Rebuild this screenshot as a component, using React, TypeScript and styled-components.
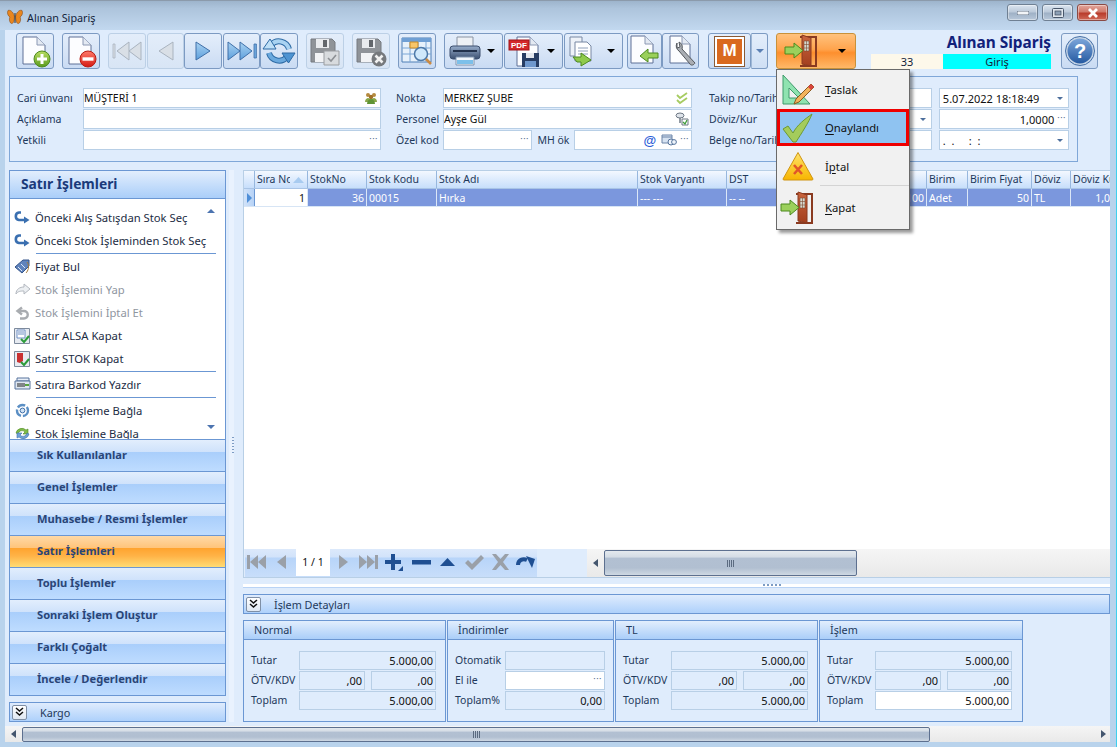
import React from "react";
import styled, { createGlobalStyle, css } from "styled-components";

const Global = createGlobalStyle`
  html, body { margin: 0; padding: 0; width: 1117px; height: 747px; overflow: hidden; }
  body { font-family: "Noto Sans", "DejaVu Sans", sans-serif; font-size: 11px; color: #1e395b; }
  * { box-sizing: border-box; }
`;

const FONT_NAVY = "#1e395b";

const Root = styled.div`
  width: 1117px; height: 747px; background: #b9d3ec; display: flex; flex-direction: column;
  border-right: 1px solid #3fd0ee;
`;
const TitleBar = styled.div`
  height: 30px; flex: none; display: flex; align-items: center; padding: 3px 8px 0 7px;
  background: linear-gradient(#9db4cc 0, #adc4dc 25%, #c2d8ef 100%);
  border-top: 1px solid #8b9aab;
`;
const TitleText = styled.span`
  margin-left: 4px; font-size: 10.8px; color: #14233a; flex: 1;
`;
const WinBtn = styled.div<{ $close?: boolean }>`
  width: 31px; height: 17px; margin-left: 4px; border: 1px solid ${p => (p.$close ? "#8a4a44" : "#6f8093")};
  border-radius: 3px; display: flex; align-items: center; justify-content: center; margin-top: -9px;
  background: ${p => p.$close
    ? "linear-gradient(#e3a79c 0, #d0796b 45%, #b93c2c 55%, #cf6a58 100%)"
    : "linear-gradient(#dbe5f0 0, #bccada 45%, #9fb1c6 55%, #b8c8da 100%)"};
  box-shadow: inset 0 0 0 1px rgba(255,255,255,.4);
`;
const WinBody = styled.div`
  flex: 1; min-height: 0; margin: 0 6px 5px 5px; background: #dfecfc; display: flex; flex-direction: column;
`;
const Toolbar = styled.div`
  height: 43px; flex: none; display: flex; padding: 3px 0 0 11px; align-items: flex-start;
`;
const Tool = styled.div<{ $w?: number; $gap?: number; $off?: boolean; $split?: boolean }>`
  width: ${p => p.$w ?? 38}px; height: 36px; margin-left: ${p => p.$gap ?? 0}px; flex: none;
  border: 1px solid ${p => (p.$off ? "#bcd0e6" : "#7c9ac2")}; border-radius: 3px;
  display: flex; align-items: center; justify-content: ${p => (p.$split ? "flex-start" : "center")};
  background: ${p => p.$off ? "linear-gradient(#e3edfa,#d8e5f5)" : "linear-gradient(#e4eefb 0,#d5e3f6 60%,#c9dbf3 100%)"};
  padding-left: ${p => (p.$split ? 3 : 0)}px;
`;
const Caret = styled.span<{ $color?: string }>`
  width: 0; height: 0; margin-left: auto; margin-right: 7px;
  border-left: 4px solid transparent; border-right: 4px solid transparent;
  border-top: 4px solid ${p => p.$color ?? "#000"};
`;
const MBox = styled.div`
  width: 29px; height: 29px; margin-left: 3px; background: #d9691f; border: 2px solid #fff; outline: 1px solid #8a5a35;
  color: #fff; font: bold 17px "Liberation Sans", sans-serif; display: flex; align-items: center; justify-content: center;
`;
const SplitEnd = styled.div`
  width: 17px; height: 36px; flex: none; border: 1px solid #7c9ac2; border-left: 1px solid #9fb8d6; border-radius: 0 3px 3px 0;
  background: linear-gradient(#e4eefb,#cfdff4); display: flex; align-items: center; justify-content: center;
  ${Caret} { margin: 0; }
`;
const ExitWrap = styled.div`
  position: relative; margin-left: 8px; flex: none;
`;
const ExitBtn = styled.div`
  width: 80px; height: 36px; border: 1px solid #c8913a; border-radius: 3px; display: flex; align-items: center; padding-left: 7px;
  background: linear-gradient(#ffc27e 0,#ffa44d 45%,#fd8f2e 55%,#ffb868 100%);
  ${Caret} { margin-right: 9px; }
`;
const Menu = styled.div`
  position: absolute; left: 0; top: 36px; width: 134px; height: 161px; z-index: 5;
  border: 1px solid #6a6a6a; background: #f1f1f1; box-shadow: 3px 3px 3px rgba(0,0,0,.4);
  display: flex; flex-direction: column;
`;
const MenuItem = styled.div<{ $h: number; $on?: boolean; $sep?: boolean }>`
  height: ${p => p.$h}px; flex: none; display: flex; align-items: center; position: relative; color: #111;
  font-size: 11.3px;
  ${p => p.$on && css`background: #8fc3f1; outline: 3px solid #ee0000; outline-offset: -3px;`}
  ${p => p.$sep && css`&::after { content: ""; position: absolute; left: 43px; right: 0; bottom: 0; height: 1px; background: #d4d4d4; }`}
`;
const MenuIconCell = styled.span`
  width: 42px; flex: none; height: 100%; display: flex; align-items: center; justify-content: center;
`;
const MenuLabel = styled.span`
  margin-left: 6px;
  u { text-underline-offset: 2px; }
`;
const Brand = styled.div`
  width: 180px; margin-left: 15px; flex: none; display: flex; flex-direction: column;
`;
const BrandTitle = styled.div`
  height: 21px; text-align: right; font: bold 15.4px/19px "Noto Sans", sans-serif; color: #11217a;
`;
const BrandRow = styled.div`
  display: flex; height: 15px; margin-top: 0; font-size: 11px; line-height: 15px; text-align: center; color: #14233a;
`;
const BrandNum = styled.span`width: 72px; background: #fdf8ea;`;
const BrandMode = styled.span`flex: 1; background: #00ffff;`;

const HeadPanel = styled.div`
  flex: none; height: 86px; margin: 3px 0 0 4px; width: 1069px; border: 1px solid #7fa7d8;
  display: flex; padding: 11px 0 0 7px; align-items: flex-start;
`;
const FormCol = styled.div<{ $w: number; $gap?: number }>`
  width: ${p => p.$w}px; margin-left: ${p => p.$gap ?? 0}px; flex: none; display: flex; flex-direction: column; gap: 1px;
`;
const FormRow = styled.div`display: flex; height: 20px; align-items: stretch;`;
const Label = styled.label<{ $w: number }>`
  width: ${p => p.$w}px; flex: none; line-height: 20px; font-size: 10.5px; color: ${FONT_NAVY}; white-space: nowrap;
`;
const Input = styled.div<{ $w?: number; $ro?: boolean; $right?: boolean; $gap?: number; $wide?: boolean }>`
  ${p => (p.$w ? `width:${p.$w}px;flex:none;` : "flex:1;min-width:0;")}
  margin-left: ${p => p.$gap ?? 0}px;
  background: ${p => (p.$ro ? "#dfecfc" : "#fff")}; border: 1px solid #b8cfe6; display: flex; align-items: center;
  padding: 0 2px 0 0; font-size: ${p => (p.$wide ? 11 : 10.5)}px; color: #111; white-space: nowrap; overflow: hidden; gap: 3px;
  justify-content: ${p => (p.$right ? "flex-end" : "flex-start")};
`;
const Grow = styled.span`flex: 1; min-width: 0;`;
const Dots = styled.span`color: #54708f; font-size: 9px; letter-spacing: .5px; line-height: 10px; margin-top: -3px;`;
const DownTick = styled.span`
  width: 0; height: 0; border-left: 3px solid transparent; border-right: 3px solid transparent; border-top: 3px solid #4c6e9c; margin: 0 3px;
`;

const Main = styled.div`flex: 1; min-height: 0; display: flex; margin-top: 8px;`;
const LeftCol = styled.div`width: 217px; margin-left: 4px; flex: none; display: flex; flex-direction: column;`;
const SideBox = styled.div`
  height: 526px; border: 1px solid #6b97d3; display: flex; flex-direction: column; background: #fff;
`;
const SideHead = styled.div`
  height: 28px; flex: none; font: bold 13.8px/26px "Noto Sans", sans-serif; color: #1a3a7a; padding-left: 11px;
  background: linear-gradient(#e2eefd,#aacef9); border-bottom: 1px solid #6b97d3;
`;
const SideList = styled.div`
  flex: 1; min-height: 0; overflow: hidden; position: relative; padding-top: 7px;
`;
const SideItem = styled.div<{ $off?: boolean }>`
  height: 23px; flex: none; display: flex; align-items: center; padding-left: 4px; gap: 4px; font-size: 11.25px; white-space: nowrap;
  color: ${p => (p.$off ? "#8f969f" : "#1c2c44")};
`;
const SideSep = styled.div<{ $h?: number }>`
  height: 1px; background: #6b97d3; margin: ${p => p.$h ?? 1}px 9px ${p => p.$h ?? 1}px 26px;
`;
const ScrollTick = styled.span<{ $up?: boolean }>`
  position: absolute; right: 10px; ${p => (p.$up ? "top: 10px;" : "bottom: 10px;")}
  width: 0; height: 0; border-left: 4px solid transparent; border-right: 4px solid transparent;
  ${p => (p.$up ? "border-bottom" : "border-top")}: 4px solid #4c74b0;
`;
const Acc = styled.div<{ $on?: boolean }>`
  height: 32px; flex: none; border-top: 1px solid #6b97d3; padding-left: 27px; font: bold 11.15px/29px "Noto Sans", sans-serif; color: #2a4577;
  background: ${p => p.$on
    ? "linear-gradient(#ffd9a6 0,#ffc47a 12px,#ffa32e 12px,#ffb347 20px,#ffdc75 31px)"
    : "linear-gradient(#e2eefd 0,#cfe2fb 12px,#a9cefb 12px,#bedcff 31px)"};
`;
const FoldBar = styled.div<{ $mt: number }>`
  height: 20px; flex: none; margin-top: ${p => p.$mt}px; display: flex; align-items: center; padding-left: 2px;
  border: 1px solid #6b97d3; background: linear-gradient(#dfecfd,#aed1fb); font-size: 10.8px; color: ${FONT_NAVY};
`;
const FoldBtn = styled.span`
  width: 15px; height: 15px; flex: none; border: 1px solid #7f8fa5; border-radius: 2px; background: linear-gradient(#fff,#dfe8f3);
  display: flex; align-items: center; justify-content: center; margin-right: 13px;
`;

const VGrip = styled.div`
  width: 17px; flex: none; position: relative;
  &::after { content: ""; position: absolute; left: 6px; top: 267px; width: 2px; height: 16px;
    background: repeating-linear-gradient(#7d9cc4 0 1px, transparent 1px 3px); }
  &::before { content: ""; position: absolute; left: 3px; top: 0; bottom: 4px; width: 5px; background: #e9f2fe; }
`;
const RightCol = styled.div`flex: 1; min-width: 0; display: flex; flex-direction: column;`;
const GridBox = styled.div`
  height: 408px; flex: none; background: #fff; border: 1px solid #b8cfe6; border-right: none; display: flex; flex-direction: column; position: relative; overflow: hidden;
`;
const COLS = "11px 53px 59px 70px 201px 89px 67px 67px 66px 41px 64px 39px 60px";
const GridHead = styled.div`
  display: grid; grid-template-columns: ${COLS}; height: 18px; flex: none;
  background: linear-gradient(#f3f8ff,#c7defb); border-bottom: 1px solid #a9c4e6;
`;
const HeadCell = styled.div`
  border-right: 1px solid #97b7de; padding: 0 2px; font-size: 10.5px; line-height: 17px; color: ${FONT_NAVY}; white-space: nowrap; overflow: hidden;
  display: flex; align-items: center;
`;
const HeadClip = styled.span`width: 33px; flex: none; overflow: hidden; margin-right: 3px;`;
const GridRow = styled.div`
  display: grid; grid-template-columns: ${COLS}; height: 18px; flex: none; border-bottom: 1px solid #d7e5f5;
`;
const RowCell = styled.div<{ $right?: boolean; $plain?: boolean }>`
  background: ${p => (p.$plain ? "#fff" : "#7b97dd")}; color: ${p => (p.$plain ? "#111" : "#fff")};
  border-right: 1px solid #dbe7f7; padding: 0 2px; font-size: 10.5px; line-height: 18px; white-space: nowrap; overflow: hidden;
  text-align: ${p => (p.$right ? "right" : "left")};
`;
const RowMark = styled.div`
  background: linear-gradient(90deg,#d2e3f9,#b6d2f6); border-right: 1px solid #6b97d3; display: flex; align-items: center; justify-content: center;
`;
const Filler = styled.div`flex: 1;`;
const GridFoot = styled.div`height: 28px; flex: none; display: flex; align-items: stretch; padding-left: 1px; background: #dfecfc;`;
const Navigator = styled.div`
  width: 292px; flex: none; display: flex; align-items: center; height: 28px; padding-bottom: 2px;
  background: linear-gradient(#dce9fb 0,#d2e3fa 8px,#b7d4f9 9px,#c8defa 28px);
`;
const Pager = styled.span`
  width: 34px; height: 28px; background: #fff; text-align: center; line-height: 26px; font-size: 10.5px; color: #111; margin: -2px 0 -2px 10px; padding-top: 1px;
`;
const NavGap = styled.span<{ $ml: number }>`margin-left: ${p => p.$ml}px; flex: none; display: flex; align-items: center; justify-content: center;`;
const HScroll = styled.div<{ $ml?: number }>`
  flex: 1; min-width: 0; margin-left: ${p => p.$ml ?? 0}px; background: linear-gradient(#f5f5f5,#e9e9e9); display: flex; align-items: center;
`;
const BottomScroll = styled(HScroll)`flex: none; height: 16px;`;
const ArrowL = styled.span`
  width: 0; height: 0; margin: 0 6px 0 6px; border-top: 4px solid transparent; border-bottom: 4px solid transparent; border-right: 5px solid #44566e; flex: none;
`;
const ArrowR = styled.span`
  width: 0; height: 0; margin: 0 4px 0 auto; border-top: 4px solid transparent; border-bottom: 4px solid transparent; border-left: 5px solid #44566e; flex: none;
`;
const Thumb = styled.div<{ $w: number; $h: number }>`
  width: ${p => p.$w}px; height: ${p => p.$h}px; flex: none; border: 1px solid #5d708f; border-radius: 2px;
  background: linear-gradient(#e4e9ee 0,#d4dce5 25%,#b2c0d2 30%,#b1bfd1 70%,#ced8e3 100%);
  display: flex; align-items: center; justify-content: center;
`;
const Grip = styled.span`
  width: 7px; height: 7px; background: repeating-linear-gradient(90deg,#5b6b80 0 1px,transparent 1px 2px);
`;
const HGrip = styled.div`
  height: 16px; flex: none; position: relative;
  &::before { content: ""; position: absolute; left: 0; right: 0; top: 6px; height: 3px; background: #fff; border-bottom: 1px solid #b9d3f5; }
  &::after { content: ""; position: absolute; left: 520px; top: 6px; width: 19px; height: 2px;
    background: repeating-linear-gradient(90deg,#7d9cc4 0 2px,transparent 2px 4px); }
`;
const Groups = styled.div`display: flex; margin-top: 6px; align-items: flex-start;`;
const Group = styled.div<{ $w: number }>`
  width: ${p => p.$w}px; height: 102px; flex: none; border: 1px solid #6b97d3; margin-right: 1px; display: flex; flex-direction: column;
`;
const GroupHead = styled.div`
  height: 19px; flex: none; font-size: 10.8px; line-height: 18px; padding-left: 10px; color: ${FONT_NAVY};
  background: linear-gradient(#e2eefd,#aacef9); border-bottom: 1px solid #6b97d3;
`;
const GroupBody = styled.div`
  padding: 11px 0 0 7px; display: flex; flex-direction: column; gap: 1px;
`;
const GRow = styled.div`display: flex; height: 19px;`;
const GLabel = styled.span<{ $w: number }>`
  width: ${p => p.$w}px; flex: none; font-size: 10.5px; line-height: 18px; color: ${FONT_NAVY}; white-space: nowrap;
`;

/* ---------- drawings ---------- */
const lg = (id: string, a: string, b: string) => (
  <linearGradient id={id} x1="0" y1="0" x2="0" y2="1"><stop offset="0" stopColor={a} /><stop offset="1" stopColor={b} /></linearGradient>
);
const Page = ({ x = 5, y = 3, w = 22, h = 27 }: { x?: number; y?: number; w?: number; h?: number }) => (
  <g>
    <path d={`M${x} ${y}h${w - 8}l8 8v${h - 8}h-${w}z`} fill="#fcfdff" stroke="#5f7197" strokeWidth="1" />
    <path d={`M${x + w - 8} ${y}v8h8`} fill="#e3e9f2" stroke="#8b98b3" strokeWidth="1" />
  </g>
);
const NewIcon = () => (
  <svg width="34" height="34" viewBox="0 0 34 34">
    <defs>{lg("gn", "#b9dd63", "#5a9a1c")}</defs>
    <Page />
    <circle cx="24" cy="25" r="8" fill="url(#gn)" stroke="#4d8a1f" />
    <path d="M24 20v10M19 25h10" stroke="#fff" strokeWidth="3" />
  </svg>
);
const DelIcon = () => (
  <svg width="34" height="34" viewBox="0 0 34 34">
    <defs>{lg("rd", "#ff7a6a", "#d51a14")}</defs>
    <Page />
    <circle cx="24" cy="25" r="8" fill="url(#rd)" stroke="#b71c14" />
    <path d="M18.5 25h11" stroke="#fff" strokeWidth="3.4" />
  </svg>
);
const First = ({ off }: { off?: boolean }) => {
  const f = off ? "#d9dfe6" : "#8cc0ea", s = off ? "#a9b3bf" : "#4b78ae";
  return (
    <svg width="32" height="24" viewBox="0 0 32 24">
      <path d="M2 5h2v14h-2z" fill={f} stroke={s} strokeWidth=".8" />
      <path d="M18 3v18L6 12zM30 3v18L18 12z" fill={f} stroke={s} />
    </svg>
  );
};
const Prev = () => (
  <svg width="20" height="24" viewBox="0 0 20 24"><path d="M17 3v18L3 12z" fill="#d9dfe6" stroke="#a9b3bf" /></svg>
);
const Next = () => (
  <svg width="20" height="24" viewBox="0 0 20 24">
    <defs>{lg("bl", "#a9d2f2", "#5d9fdc")}</defs>
    <path d="M3 3v18l14-9z" fill="url(#bl)" stroke="#3f6fa8" />
  </svg>
);
const Last = () => (
  <svg width="32" height="24" viewBox="0 0 32 24">
    <defs>{lg("bl2", "#a9d2f2", "#5d9fdc")}</defs>
    <path d="M2 3v18l12-9zM14 3v18l12-9z" fill="url(#bl2)" stroke="#3f6fa8" />
    <path d="M28 5h2.4v14H28z" fill="#6ea9e0" stroke="#3f6fa8" strokeWidth=".8" />
  </svg>
);
const Refresh = () => (
  <svg width="34" height="32" viewBox="0 0 34 32">
    <g fill="none" strokeLinecap="butt">
      <path d="M9 10A10.500 10.500 0 0 1 27 14" stroke="#2e6ba5" strokeWidth="6" />
      <path d="M9 10A10.500 10.500 0 0 1 27 14" stroke="#a9d3f2" strokeWidth="4" />
      <path d="M25 22A10.500 10.500 0 0 1 7 18" stroke="#2e6ba5" strokeWidth="6" />
      <path d="M25 22A10.500 10.500 0 0 1 7 18" stroke="#6aa9de" strokeWidth="4" />
    </g>
    <path d="M1 14l7-10 6 10z" fill="#bfe0f7" stroke="#2e6ba5" />
    <path d="M20 18h13l-6.500 10z" fill="#4e94d2" stroke="#2e6ba5" />
  </svg>
);
const Floppy = ({ x }: { x?: boolean }) => (
  <svg width="34" height="32" viewBox="0 0 34 32">
    <path d="M3 4h21l3 3v20H3z" fill="#8f9398" stroke="#777b80" />
    <path d="M8 4h13v9H8z" fill="#e9ebee" />
    <path d="M15 5h4v7h-4z" fill="#62666b" />
    <path d="M7 18h16v9H7z" fill="#f2f3f5" />
    {x ? (
      <g>
        <circle cx="25" cy="24" r="7.5" fill="#76797d" />
        <path d="M21.5 20.5l7 7M28.5 20.5l-7 7" stroke="#f1f1f1" strokeWidth="2.6" />
      </g>
    ) : (
      <g>
        <path d="M16 16h15v14H16z" fill="#d8dbde" stroke="#9a9da1" />
        <path d="M20 23l3 3 5-6" fill="none" stroke="#8d9095" strokeWidth="1.6" />
      </g>
    )}
  </svg>
);
const TableSearch = () => (
  <svg width="34" height="32" viewBox="0 0 34 32">
    <path d="M2 3h29v24H2z" fill="#e7f1fb" stroke="#4f7fb5" />
    <path d="M2 3h29v4H2z" fill="#6f9fd4" />
    <path d="M2 13h29M2 19h29M10 7v20M18 7v20M26 7v20" stroke="#7ba6d6" fill="none" />
    <path d="M10 7h8v6h-8z" fill="#f8c66a" stroke="#c98a24" />
    <circle cx="21" cy="19" r="6.5" fill="#cfe8fb" stroke="#4d79a8" strokeWidth="1.5" />
    <path d="M26 24l5 5" stroke="#c98a44" strokeWidth="2.6" />
  </svg>
);
const Printer = () => (
  <svg width="34" height="32" viewBox="0 0 34 32">
    <defs>{lg("pr", "#98aecb", "#3b4f70")}</defs>
    <path d="M9 2h16v11H9z" fill="#eef1f5" stroke="#8a94a3" />
    <rect x="2" y="11" width="30" height="13" rx="3" fill="url(#pr)" stroke="#3c4f6e" />
    <path d="M5 16h24" stroke="#23324c" strokeWidth="2" />
    <path d="M8 22h18v8H8z" fill="#f2f7fc" stroke="#7f93ad" />
    <path d="M9 25h16v4H9z" fill="#7cc0ea" />
  </svg>
);
const PdfIcon = () => (
  <svg width="34" height="33" viewBox="0 0 34 33">
    <Page x={9} y={2} w={21} h={29} />
    <rect x="1" y="5" width="20" height="10" fill="#d3272a" stroke="#a01518" />
    <text x="3" y="13" fontFamily="Liberation Sans" fontWeight="bold" fontSize="8" fill="#fff">PDF</text>
    <path d="M14 18h17v14H14z" fill="#273d63" />
    <path d="M18 18h8v5h-8z" fill="#e3e7ee" />
    <path d="M17 26h11v6H17z" fill="#6f98cd" />
  </svg>
);
const CopyIcon = () => (
  <svg width="30" height="32" viewBox="0 0 30 32">
    <path d="M2 2h12v19H2z" fill="#eef2f8" stroke="#7888a3" />
    <path d="M7 7h12l4 4v15H7z" fill="#fff" stroke="#7888a3" />
    <path d="M10 13h10M10 16h10M10 19h10" stroke="#8fa0bb" />
    <path d="M5 22h8v-4l10 7-10 6v-4H9z" fill="#8fca4c" stroke="#4d8a1f" />
  </svg>
);
const BackDoc = () => (
  <svg width="30" height="32" viewBox="0 0 30 32">
    <Page x={1} y={1} w={22} h={27} />
    <path d="M28 18v5H18v4L10 21l8-7v4z" fill="#9ad05a" stroke="#4d8a1f" />
  </svg>
);
const WrenchDoc = () => (
  <svg width="32" height="33" viewBox="0 0 32 33">
    <Page x={5} y={1} w={20} h={27} />
    <path d="M12 8a6 6 0 0 0 2 8l11 13c1 2 4 1 5-1L17 14a6 6 0 0 0-3-7l1 5-3 1z" fill="#a9adb3" stroke="#55595e" />
  </svg>
);
const Door = ({ s = 1 }: { s?: number }) => (
  <svg width={36 * s} height={34 * s} viewBox="0 0 36 34">
    <defs>{lg("dr", "#c9653f", "#a33f1e")}</defs>
    <path d="M16 3h16v29H16" fill="none" stroke="#8a3a20" strokeWidth="2" />
    <path d="M18 1l9 3v28l-9-2z" fill="url(#dr)" stroke="#8a3a20" />
    <path d="M20 7h5v10h-5z" fill="#d6d8cf" stroke="#7c4a30" strokeWidth=".6" />
    <path d="M20 10.5h5M20 14h5M22.5 7v10" stroke="#7c4a30" strokeWidth=".6" />
    <path d="M1 13h9V9l9 7.5-9 7.5v-4H1z" fill="#9bd05c" stroke="#4d8a1f" />
  </svg>
);
const HelpIcon = () => (
  <svg width="30" height="30" viewBox="0 0 30 30">
    <defs>{lg("hp", "#7fa8dc", "#22579f")}</defs>
    <circle cx="15" cy="15" r="13.5" fill="url(#hp)" stroke="#c5d4e6" strokeWidth="2" />
    <circle cx="15" cy="15" r="14.5" fill="none" stroke="#456fa6" />
    <text x="15" y="22" textAnchor="middle" fontFamily="Liberation Sans" fontWeight="bold" fontSize="20" fill="#fff">?</text>
  </svg>
);
const Butterfly = () => (
  <svg width="16" height="16" viewBox="0 0 16 16">
    <path d="M7.4 7C6 2.5 3 .5 1 1.5-.3 4 1 7 3 8 1.5 10 3 15 5 14.5c2-.5 2.4-4 2.4-7.5z" fill="#e8861f" stroke="#7a3f10" strokeWidth=".5" />
    <path d="M8.6 7C10 2.5 13 .5 15 1.5c1.3 2.5 0 5.5-2 6.5 1.5 2 0 7-2 6.5-2-.5-2.4-4-2.4-7.5z" fill="#e8861f" stroke="#7a3f10" strokeWidth=".5" />
    <path d="M8 4v10" stroke="#333" strokeWidth="1" />
  </svg>
);
const GroupUsers = () => (
  <svg width="14" height="13" viewBox="0 0 14 13">
    <circle cx="4" cy="3" r="2" fill="#b58a3e" /><circle cx="10" cy="3" r="2" fill="#b58a3e" />
    <circle cx="7" cy="5" r="2.2" fill="#a07028" />
    <path d="M1 10c0-3 2-4 3-4s3 1 3 4zM7 10c0-3 2-4 3-4s3 1 3 4z" fill="#8aa84a" />
    <path d="M3 12c0-3 2-5 4-5s4 2 4 5z" fill="#5f9436" />
  </svg>
);
const DoubleCheck = () => (
  <svg width="14" height="13" viewBox="0 0 14 13">
    <path d="M2 3l3 3 7-5M2 8l3 3 7-5" fill="none" stroke="#a7cc62" strokeWidth="1.8" />
  </svg>
);
const PersonCheck = () => (
  <svg width="14" height="14" viewBox="0 0 14 14">
    <ellipse cx="5" cy="3.5" rx="4" ry="2.5" fill="#dfe4ea" stroke="#6e7884" />
    <path d="M5 6v5" stroke="#6e7884" strokeWidth="1.5" />
    <path d="M7 7h6v6H7z" fill="#fff" stroke="#6e7884" />
    <path d="M8 10l2 2 2-4" fill="none" stroke="#3f9d3a" strokeWidth="1.3" />
  </svg>
);
const MailCard = () => (
  <svg width="16" height="12" viewBox="0 0 16 12">
    <path d="M1 1h10v8H1z" fill="#d7e3f2" stroke="#6d85a8" />
    <path d="M1 3h10" stroke="#6d85a8" />
    <circle cx="10" cy="8" r="3" fill="#eef4fb" stroke="#56749c" />
    <circle cx="13" cy="8" r="2.4" fill="#eef4fb" stroke="#56749c" />
  </svg>
);
const At = styled.span`color: #2a5ed8; font: bold 13px "Liberation Sans", sans-serif; margin-right: 2px;`;
const Chevrons = () => (
  <svg width="9" height="10" viewBox="0 0 9 10">
    <path d="M1 1l3.5 3L8 1M1 5l3.5 3L8 5" fill="none" stroke="#111" strokeWidth="1.5" />
  </svg>
);
const MinI = () => <svg width="12" height="4" viewBox="0 0 12 4"><rect width="12" height="4" rx="1" fill="#f2f5f8" stroke="#48566a" strokeWidth=".8" /></svg>;
const MaxI = () => <svg width="12" height="10" viewBox="0 0 12 10"><rect x=".5" y=".5" width="11" height="9" rx="1" fill="#dfe6ee" stroke="#48566a" /><rect x="3" y="3" width="6" height="4" fill="#8da0b6" stroke="#39465a" strokeWidth=".7" /></svg>;
const CloseI = () => <svg width="12" height="10" viewBox="0 0 12 10"><path d="M2 1l8 8M10 1l-8 8" stroke="#fff" strokeWidth="2.8" /></svg>;

/* sidebar icons */
const CurveBlue = () => (
  <svg width="17" height="15" viewBox="0 0 17 15"><path d="M7 2.5H5a3.8 3.8 0 0 0 0 7.5h6" fill="none" stroke="#3a6fb0" strokeWidth="2.6" /><path d="M10 6.5l5.5 3.5-5.5 3.5z" fill="#3a6fb0" /></svg>
);
const Tag = () => (
  <svg width="17" height="15" viewBox="0 0 17 15"><path d="M1 8l8-7h6v6l-7 7z" fill="#5f83bd" stroke="#35558a" /><path d="M4 8l4 4M7 5l4 4" stroke="#dbe6f5" /><path d="M13 3c3 4 1 9-1 11" fill="none" stroke="#a67b3a" /></svg>
);
const GrayFwd = () => (
  <svg width="17" height="15" viewBox="0 0 17 15"><path d="M2 12c0-5 4-7 8-7V2l6 5-6 5V9c-3 0-6 0-8 3z" fill="#eceff2" stroke="#b3b8bf" /></svg>
);
const GrayBack = () => (
  <svg width="17" height="15" viewBox="0 0 17 15"><path d="M8 2.5L3.5 6 8 9.5" fill="none" stroke="#a9acb0" strokeWidth="2.4" /><path d="M4 6h6a3.6 3.6 0 0 1 0 7.5H6" fill="none" stroke="#a9acb0" strokeWidth="2.4" /></svg>
);
const DocCheck = ({ red }: { red?: boolean }) => (
  <svg width="17" height="16" viewBox="0 0 17 16">
    <path d="M.5.5h15v15H.5z" fill="#e7ebf1" stroke="#7d8a9c" />
    {red ? <path d="M3 2h6v8l-3 2-3-1z" fill="#c93131" /> : <path d="M3 2h8v8H3z" fill="#fff" stroke="#6f8fc4" />}
    {!red && <path d="M4 4h6M4 6h6" stroke="#6f8fc4" />}
    <path d="M7 11l3 3 5-6" fill="none" stroke="#2d9c3a" strokeWidth="2" />
  </svg>
);
const Barcode = () => (
  <svg width="17" height="15" viewBox="0 0 17 15">
    <path d="M3 1h12v3H3z" fill="#eaf0f8" stroke="#57739c" />
    <path d="M1 4h15v8H1z" fill="#dfe7f1" stroke="#57739c" />
    <path d="M4 6v4M6 6v4M8 6v4M10 6v4" stroke="#222" />
    <path d="M11 8h4" stroke="#59a53e" strokeWidth="2" />
  </svg>
);
const Circles = () => (
  <svg width="17" height="15" viewBox="0 0 17 15">
    <circle cx="8.5" cy="7.5" r="5.5" fill="none" stroke="#5b8fc4" strokeWidth="2.4" strokeDasharray="8 2" />
    <circle cx="8.5" cy="7.5" r="2.4" fill="#cfe2f5" stroke="#3f6fa8" />
  </svg>
);
const GreenSync = () => (
  <svg width="17" height="15" viewBox="0 0 17 15">
    <path d="M2 7a6 6 0 0 1 10-3l2-1v5H9l2-2a4 4 0 0 0-7 2z" fill="#7fbb4a" stroke="#4d8a1f" strokeWidth=".6" />
    <path d="M15 8a6 6 0 0 1-10 3l-2 1V7h5L6 9a4 4 0 0 0 7-2z" fill="#6fa2d6" stroke="#3f6fa8" strokeWidth=".6" />
  </svg>
);
/* navigator */
const NavFirst = ({ c = "#9aa0a8" }: { c?: string }) => (
  <svg width="20" height="16" viewBox="0 0 20 16"><path d="M1 1h3v14H1zM12 1v14L4 8zM20 1v14l-8-7z" fill={c} /></svg>
);
const NavPrev = ({ c = "#9aa0a8" }: { c?: string }) => (
  <svg width="10" height="16" viewBox="0 0 10 16"><path d="M10 1v14L1 8z" fill={c} /></svg>
);
const NavNext = ({ c = "#9aa0a8" }: { c?: string }) => (
  <svg width="10" height="16" viewBox="0 0 10 16"><path d="M0 1v14l9-7z" fill={c} /></svg>
);
const NavLast = ({ c = "#9aa0a8" }: { c?: string }) => (
  <svg width="20" height="16" viewBox="0 0 20 16"><path d="M0 1v14l8-7zM8 1v14l8-7zM16 1h3v14h-3z" fill={c} /></svg>
);
const NavPlus = () => (
  <svg width="19" height="19" viewBox="0 0 19 19"><path d="M6 1h4v6h6v4h-6v6H6v-6H0V7h6z" fill="#1f4f92" /><path d="M18 13v5h-5z" fill="#1f4f92" /></svg>
);
const NavMinus = () => <svg width="19" height="5" viewBox="0 0 19 5"><rect width="19" height="4.5" fill="#1f4f92" /></svg>;
const NavUp = () => <svg width="15" height="9" viewBox="0 0 15 9"><path d="M7.5 0L15 8H0z" fill="#1f4f92" /></svg>;
const NavCheck = () => <svg width="19" height="15" viewBox="0 0 19 15"><path d="M0 8l3-3 4 4 9-9 3 3L7 15z" fill="#9aa0a8" /></svg>;
const NavX = () => <svg width="19" height="16" viewBox="0 0 19 16"><path d="M1 0h4l4.500 5L14 0h4l-6 8 6 8h-4l-4.500-5L5 16H1l6-8z" fill="#9aa0a8" /></svg>;
const NavRedo = () => (
  <svg width="19" height="14" viewBox="0 0 19 14"><path d="M2 10c0-5 5-7 9-5" fill="none" stroke="#1f4f92" strokeWidth="4" /><path d="M10 1l9 3-3 9z" fill="#1f4f92" /></svg>
);
/* menu */
const SquarePencil = () => (
  <svg width="34" height="34" viewBox="0 0 34 34">
    <path d="M2 2v29h27z" fill="#8fe3b0" stroke="#3e9a6a" />
    <path d="M8 15v10h10z" fill="#f1f1f1" stroke="#3e9a6a" />
    <path d="M15 26l-2 5 5-2 15-15-3-3z" fill="#f3b35b" stroke="#8a5a20" />
    <path d="M27 14l3 3 3-3-3-3z" fill="#d9443e" />
  </svg>
);
const BigCheck = () => (
  <svg width="32" height="30" viewBox="0 0 32 30">
    <path d="M1 16l5-3 5 7C15 12 23 6 30 1c-3 8-11 20-16 28h-3z" fill="#a4cc5c" stroke="#6c9a33" />
  </svg>
);
const Warn = () => (
  <svg width="32" height="30" viewBox="0 0 32 30">
    <defs>{lg("wr", "#ffe36a", "#f7b500")}</defs>
    <path d="M16 1.500L31 28a1 1 0 0 1-1 1H2a1 1 0 0 1-1-1z" fill="url(#wr)" stroke="#d09410" strokeLinejoin="round" />
    <path d="M12 14l8 9M20 14l-8 9" stroke="#e0562a" strokeWidth="2.600" />
  </svg>
);

const ReadNums = ({ a, b, c, white, lw, w1, w2 }: { a: string; b: string; c: string; white?: boolean; lw: number; w1: number; w2: number }) => (
  <GroupBody>
    <GRow><GLabel $w={lw}>Tutar</GLabel><Input $wide $w={137} $ro $right>{a}</Input></GRow>
    <GRow><GLabel $w={lw}>ÖTV/KDV</GLabel><Input $wide $w={w1} $ro $right>{b}</Input><Input $wide $w={w2} $gap={6} $ro $right>{b}</Input></GRow>
    <GRow><GLabel $w={lw}>Toplam</GLabel><Input $wide $w={137} $ro={!white} $right>{c}</Input></GRow>
  </GroupBody>
);

const HEAD: string[] = ["Stok Kodu", "Stok Adı", "Stok Varyantı", "DST", "", "", "Birim", "Birim Fiyat", "Döviz", "Döviz Kuru"];

export default function App() {
  return (
    <Root>
      <Global />
      <TitleBar>
        <Butterfly />
        <TitleText>Alınan Sipariş</TitleText>
        <WinBtn><MinI /></WinBtn>
        <WinBtn><MaxI /></WinBtn>
        <WinBtn $close><CloseI /></WinBtn>
      </TitleBar>
      <WinBody>
        <Toolbar>
          <Tool><NewIcon /></Tool>
          <Tool $gap={8}><DelIcon /></Tool>
          <Tool $gap={8} $off><First off /></Tool>
          <Tool $gap={1} $w={37} $off><Prev /></Tool>
          <Tool $w={38}><Next /></Tool>
          <Tool $gap={1} $w={37}><Last /></Tool>
          <Tool><Refresh /></Tool>
          <Tool $gap={8} $off><Floppy /></Tool>
          <Tool $gap={8} $off><Floppy x /></Tool>
          <Tool $gap={8}><TableSearch /></Tool>
          <Tool $gap={8} $w={59} $split><Printer /><Caret /></Tool>
          <Tool $gap={1} $w={59} $split><PdfIcon /><Caret /></Tool>
          <Tool $gap={1} $w={59} $split><CopyIcon /><Caret /></Tool>
          <Tool $gap={4} $w={35}><BackDoc /></Tool>
          <Tool $w={37}><WrenchDoc /></Tool>
          <Tool $gap={9} $w={43} $split><MBox>M</MBox></Tool>
          <SplitEnd><Caret $color="#5b80b4" /></SplitEnd>
          <ExitWrap>
            <ExitBtn><Door /><Caret /></ExitBtn>
            <Menu>
              <MenuItem $h={39}><MenuIconCell><SquarePencil /></MenuIconCell><MenuLabel><u>T</u>aslak</MenuLabel></MenuItem>
              <MenuItem $h={37} $on><MenuIconCell><BigCheck /></MenuIconCell><MenuLabel><u>O</u>naylandı</MenuLabel></MenuItem>
              <MenuItem $h={40} $sep><MenuIconCell><Warn /></MenuIconCell><MenuLabel>İ<u>p</u>tal</MenuLabel></MenuItem>
              <MenuItem $h={43}><MenuIconCell><Door /></MenuIconCell><MenuLabel><u>K</u>apat</MenuLabel></MenuItem>
            </Menu>
          </ExitWrap>
          <Brand>
            <BrandTitle>Alınan Sipariş</BrandTitle>
            <BrandRow><BrandNum>33</BrandNum><BrandMode>Giriş</BrandMode></BrandRow>
          </Brand>
          <Tool $gap={10} $w={37}><HelpIcon /></Tool>
        </Toolbar>

        <HeadPanel>
          <FormCol $w={364}>
            <FormRow><Label $w={66}>Cari ünvanı</Label><Input>MÜŞTERİ 1<Grow /><GroupUsers /></Input></FormRow>
            <FormRow><Label $w={66}>Açıklama</Label><Input /></FormRow>
            <FormRow><Label $w={66}>Yetkili</Label><Input><Grow /><Dots>···</Dots></Input></FormRow>
          </FormCol>
          <FormCol $w={296} $gap={15}>
            <FormRow><Label $w={47}>Nokta</Label><Input>MERKEZ ŞUBE<Grow /><DoubleCheck /></Input></FormRow>
            <FormRow><Label $w={47}>Personel</Label><Input>Ayşe Gül<Grow /><PersonCheck /></Input></FormRow>
            <FormRow>
              <Label $w={47}>Özel kod</Label><Input $w={89}><Grow /><Dots>···</Dots></Input>
              <Label $w={42}>&nbsp;&nbsp;MH ök</Label><Input><Grow /><At>@</At><MailCard /><Dots>···</Dots></Input>
            </FormRow>
          </FormCol>
          <FormCol $w={360} $gap={17}>
            <FormRow><Label $w={72}>Takip no/Tarih</Label><Input $w={151} /><Input $wide $w={130} $gap={7}>&nbsp;5.07.2022 18:18:49<Grow /><DownTick /></Input></FormRow>
            <FormRow><Label $w={72}>Döviz/Kur</Label><Input $w={151}><Grow /><DownTick /></Input><Input $wide $w={130} $gap={7}><Grow />1,0000<Dots>···</Dots></Input></FormRow>
            <FormRow><Label $w={72}>Belge no/Tarih</Label><Input $w={151} /><Input $wide $w={130} $gap={7}>&nbsp;.&nbsp;&nbsp;.&nbsp;&nbsp;&nbsp;&nbsp;&nbsp;:&nbsp;&nbsp;:<Grow /><DownTick /></Input></FormRow>
          </FormCol>
        </HeadPanel>

        <Main>
          <LeftCol>
            <SideBox>
              <SideHead>Satır İşlemleri</SideHead>
              <SideList>
                <ScrollTick $up />
                <SideItem><CurveBlue />Önceki Alış Satışdan Stok Seç</SideItem>
                <SideItem><CurveBlue />Önceki Stok İşleminden Stok Seç</SideItem>
                <SideSep />
                <SideItem><Tag />Fiyat Bul</SideItem>
                <SideItem $off><GrayFwd />Stok İşlemini Yap</SideItem>
                <SideItem $off><GrayBack />Stok İşlemini İptal Et</SideItem>
                <SideItem><DocCheck />Satır ALSA Kapat</SideItem>
                <SideItem><DocCheck red />Satır STOK Kapat</SideItem>
                <SideSep />
                <SideItem><Barcode />Satıra Barkod Yazdır</SideItem>
                <SideSep />
                <SideItem><Circles />Önceki İşleme Bağla</SideItem>
                <SideItem><GreenSync />Stok İşlemine Bağla</SideItem>
                <ScrollTick />
              </SideList>
              <Acc>Sık Kullanılanlar</Acc>
              <Acc>Genel İşlemler</Acc>
              <Acc>Muhasebe / Resmi İşlemler</Acc>
              <Acc $on>Satır İşlemleri</Acc>
              <Acc>Toplu İşlemler</Acc>
              <Acc>Sonraki İşlem Oluştur</Acc>
              <Acc>Farklı Çoğalt</Acc>
              <Acc>İncele / Değerlendir</Acc>
            </SideBox>
            <FoldBar $mt={6}><FoldBtn><Chevrons /></FoldBtn>Kargo</FoldBar>
          </LeftCol>
          <VGrip />
          <RightCol>
            <GridBox>
              <GridHead>
                <HeadCell />
                <HeadCell>
                  <HeadClip>Sıra No</HeadClip>
                  <svg width="11" height="6" viewBox="0 0 11 6"><path d="M5.500 0L11 6H0z" fill="#a8cbf0" /></svg>
                </HeadCell>
                <HeadCell>StokNo</HeadCell>
                {HEAD.map((h, i) => <HeadCell key={i}>{h}</HeadCell>)}
              </GridHead>
              <GridRow>
                <RowMark><svg width="7" height="10" viewBox="0 0 7 10"><path d="M1 0l5 5-5 5z" fill="#4f8fd8" /></svg></RowMark>
                <RowCell $plain $right>1</RowCell>
                <RowCell $right>36</RowCell>
                <RowCell>00015</RowCell>
                <RowCell>Hırka</RowCell>
                <RowCell>--- ---</RowCell>
                <RowCell>-- --</RowCell>
                <RowCell />
                <RowCell $right>100</RowCell>
                <RowCell>Adet</RowCell>
                <RowCell $right>50</RowCell>
                <RowCell>TL</RowCell>
                <RowCell $right>1,0000</RowCell>
              </GridRow>
              <Filler />
              <GridFoot>
                <Navigator>
                  <NavGap $ml={1}><NavFirst /></NavGap>
                  <NavGap $ml={10}><NavPrev /></NavGap>
                  <Pager>1 / 1</Pager>
                  <NavGap $ml={9}><NavNext /></NavGap>
                  <NavGap $ml={10}><NavLast /></NavGap>
                  <NavGap $ml={6}><NavPlus /></NavGap>
                  <NavGap $ml={8}><NavMinus /></NavGap>
                  <NavGap $ml={9}><NavUp /></NavGap>
                  <NavGap $ml={10}><NavCheck /></NavGap>
                  <NavGap $ml={7}><NavX /></NavGap>
                  <NavGap $ml={6}><NavRedo /></NavGap>
                </Navigator>
                <HScroll $ml={50}>
                  <ArrowL /><Thumb $w={253} $h={26}><Grip /></Thumb>
                </HScroll>
              </GridFoot>
            </GridBox>
            <HGrip />
            <FoldBar $mt={0}><FoldBtn><Chevrons /></FoldBtn>İşlem Detayları</FoldBar>
            <Groups>
              <Group $w={203}>
                <GroupHead>Normal</GroupHead>
                <ReadNums a="5.000,00" b=",00" c="5.000,00" lw={48} w1={66} w2={65} />
              </Group>
              <Group $w={167}>
                <GroupHead>İndirimler</GroupHead>
                <GroupBody>
                  <GRow><GLabel $w={50}>Otomatik</GLabel><Input $w={100} $ro /></GRow>
                  <GRow><GLabel $w={50}>El ile</GLabel><Input $w={100}><Grow /><Dots>···</Dots></Input></GRow>
                  <GRow><GLabel $w={50}>Toplam%</GLabel><Input $wide $w={100} $ro $right>0,00</Input></GRow>
                </GroupBody>
              </Group>
              <Group $w={203}>
                <GroupHead>TL</GroupHead>
                <ReadNums a="5.000,00" b=",00" c="5.000,00" lw={48} w1={66} w2={65} />
              </Group>
              <Group $w={204}>
                <GroupHead>İşlem</GroupHead>
                <ReadNums a="5.000,00" b=",00" c="5.000,00" white lw={48} w1={66} w2={65} />
              </Group>
            </Groups>
          </RightCol>
        </Main>

        <BottomScroll>
          <ArrowL /><Thumb $w={908} $h={15}><Grip /></Thumb><ArrowR />
        </BottomScroll>
      </WinBody>
    </Root>
  );
}
